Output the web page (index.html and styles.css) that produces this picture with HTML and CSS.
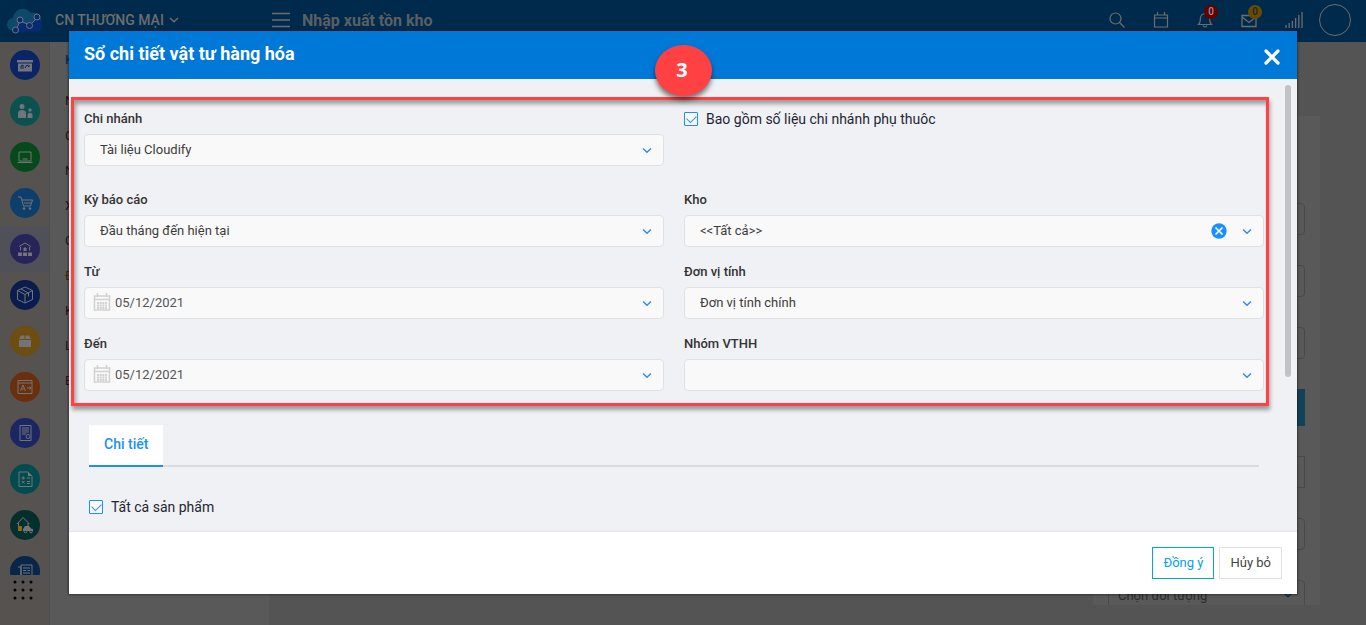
FILE: index.html
```html
<!DOCTYPE html>
<html lang="vi">
<head>
<meta charset="utf-8">
<meta name="viewport" content="width=device-width, initial-scale=1">
<title>Sổ chi tiết vật tư hàng hóa</title>
<link rel="stylesheet" href="styles.css">
</head>
<body>
<svg class="defs" aria-hidden="true">
  <symbol id="chevron" viewBox="0 0 10 6"><path d="M1 1l4 3.8L9 1" fill="none" stroke="currentColor" stroke-width="1.4"/></symbol>
  <symbol id="calendar" viewBox="0 0 18 20"><path d="M1.500 4h15v14h-15zM1.500 7.500h15M4.500 1v4M13.500 1v4" fill="none" stroke="currentColor" stroke-width="1.600"/><path d="M4 11h10M4 13.500h10M4 16h10" fill="none" stroke="currentColor" stroke-width="1.800" stroke-dasharray="2 .66"/></symbol>
</svg>

<div class="app">
  <header class="topbar">
    <div class="brand">
      <svg class="logo" viewBox="0 0 38 28"><path d="M8 25C-1 25-1 13 7 12 8 3 19-1 25 7c6-1 11 3 10 9 2 5-1 9-5 9z" fill="#0b4a69"/><path d="M8 26L14 15l9 4L31 12c8 3 7 13-1 13.500z" fill="#082a75"/><path d="M10 24l4-9 10 4 7-7" fill="none" stroke="#77736f"/><g fill="#082a75" stroke="#77736f"><circle cx="9.500" cy="24" r="3"/><circle cx="14" cy="14" r="3"/><circle cx="23.500" cy="19.500" r="3"/><circle cx="31" cy="11" r="3"/></g></svg>
      <button class="branch" type="button">CN THƯƠNG MẠI <svg width="10" height="6"><use href="#chevron"/></svg></button>
    </div>
    <button class="icon-button" type="button" aria-label="Menu"><svg width="18" height="16" viewBox="0 0 18 16"><path d="M0 1.500h18M0 8h18M0 14.500h18" stroke="currentColor" stroke-width="1.3"/></svg></button>
    <h1 class="page-title">Nhập xuất tồn kho</h1>
    <nav class="tools">
      <button class="icon-button" type="button" aria-label="Search"><svg width="16" height="16" viewBox="0 0 16 16" fill="none" stroke="currentColor" stroke-width="1.2"><circle cx="6.500" cy="6.500" r="5.500"/><path d="M10.500 10.500L15.500 15.500"/></svg></button>
      <button class="icon-button" type="button" aria-label="Calendar"><svg width="16" height="16" viewBox="0 0 16 16" fill="none" stroke="currentColor" stroke-width="1.2"><path d="M1.500 3h13v12h-13zM1.500 6h13M4.500 0v3M11.500 0v3"/></svg></button>
      <button class="icon-button" type="button" aria-label="Alerts"><svg width="16" height="16" viewBox="0 0 16 16" fill="none" stroke="currentColor" stroke-width="1.2"><path d="M1.500 12.500C4 10 3 8 3.500 5.500c1-5 8-5 9 0C13 8 12 10 14.500 12.500zM6 13.500c1 2 3 2 4 0"/></svg><span class="badge">0</span></button>
      <button class="icon-button" type="button" aria-label="Messages"><svg width="16" height="16" viewBox="0 0 16 16" fill="none" stroke="currentColor" stroke-width="1.3"><path d="M1 3.500h14v11H1zM1 5l7 5.500L15 5"/></svg><span class="badge badge-gold">0</span></button>
      <svg class="signal" width="18" height="16" viewBox="0 0 18 16"><path d="M1 16v-3M4.200 16v-5M7.400 16V9M10.600 16V6M13.800 16V3M17 16V0" stroke="currentColor" stroke-width="1.300"/></svg>
      <button class="avatar" type="button" aria-label="Account"></button>
    </nav>
  </header>

  <div class="workspace">
    <nav class="sidebar">
      <div class="modules">
        <a class="module" href="#" aria-label="Dashboard"><svg class="disc blue" viewBox="0 0 30 30"><path class="solid" d="M7 10h16v2.500H7zM8 13.500h14v8H8z"/><path d="M11 19v-3l2-1v4M15 18l2-3 2 2v-2" stroke="#0b2466"/></svg></a>
        <a class="module" href="#" aria-label="Customers"><svg class="disc teal" viewBox="0 0 30 30"><circle class="solid" cx="12" cy="10.500" r="2.500"/><path class="solid" d="M8 22v-5c0-4 8-4 8 0v5z"/><circle class="solid" cx="20" cy="14" r="1.700"/><path class="solid" d="M17.500 22v-3c0-3 5-3 5 0v3z"/></svg></a>
        <a class="module" href="#" aria-label="Sales"><svg class="disc green" viewBox="0 0 30 30"><path d="M9 10h12v9H9zM7.500 20.500h15M12.500 17h5"/></svg></a>
        <a class="module" href="#" aria-label="Purchasing"><svg class="disc sky" viewBox="0 0 30 30"><path d="M8 9h3l2.500 9h7l2-6H12M14 15h7"/><circle class="solid" cx="14" cy="20.500" r="1.200"/><circle class="solid" cx="20" cy="20.500" r="1.200"/></svg></a>
        <a class="module active" href="#" aria-label="Inventory"><svg class="disc violet" viewBox="0 0 30 30"><path d="M9 12.500l6-3.500 6 3.500M10.500 13v3.500M19.500 13v3.500M15 13v3"/><path class="solid" d="M8 18.500h4v3.500H8zM13 18.500h4v3.500h-4zM18 18.500h4v3.500h-4zM13.500 14h3v3h-3z"/></svg></a>
        <a class="module" href="#" aria-label="Products"><svg class="disc navy" viewBox="0 0 30 30"><path d="M15 7l7.500 3.500v9L15 23l-7.500-3.500v-9zM7.500 10.500L15 14.500l7.500-4M15 14.500V23M11 9l7.500 4v3.500"/></svg></a>
        <a class="module" href="#" aria-label="Packages"><svg class="disc gold" viewBox="0 0 30 30"><path class="solid" d="M11 9.500h3.500v3.500H9zM15.500 9.500H19l2 3.500h-5.500zM9 14h12v7H9z"/></svg></a>
        <a class="module" href="#" aria-label="Assets"><svg class="disc orange" viewBox="0 0 30 30"><path d="M8 8.500h14v13H8zM8 11h14M10.500 19l2.500-6 2.500 6M11.500 17h3M17 16h4M19.500 14.500L21 16l-1.500 1.500"/></svg></a>
        <a class="module" href="#" aria-label="Invoices"><svg class="disc indigo" viewBox="0 0 30 30"><path d="M10 7.500h11v15H10zM12 10h7M12 12h7M12 14h7M12 16h4"/><circle cx="18" cy="18.500" r="2"/></svg></a>
        <a class="module" href="#" aria-label="Accounting"><svg class="disc cyan" viewBox="0 0 30 30"><path d="M9 8h9l4 4v10.500H9zM11.500 14h3.500M13.200 12.300v3.400M17 14h3M12 17l2.500 2.500M14.500 17L12 19.500M17 17.500h3M17 19.500h3"/><path class="solid" d="M18 8l4 4h-4z"/></svg></a>
        <a class="module" href="#" aria-label="Property"><svg class="disc pine" viewBox="0 0 30 30"><path d="M7 14l6-6.500 6.500 6.500M8.500 13v8M18 13v3"/><path class="solid" d="M13 21v-2l2-3h4l2 2.500 2 .5v2z"/><path d="M8.500 16.500h3v4h-3z" stroke="#8b6b10" fill="#8b6b10"/><circle cx="15.500" cy="21.500" r="1.300"/><circle cx="21" cy="21.500" r="1.300"/></svg></a>
        <a class="module" href="#" aria-label="News"><svg class="disc ocean" viewBox="0 0 30 30"><path d="M11 9h11v14H11zM8 11h3v12H8M13 12h7M13 14.500h3M17.500 14.500H20M13 17h7"/></svg></a>
      </div>
      <button class="icon-button more" type="button" aria-label="All modules"><svg width="20" height="20" viewBox="0 0 20 20"><g fill="#000"><circle cx="2" cy="2" r="1.500"/><circle cx="10" cy="2" r="1.500"/><circle cx="18" cy="2" r="1.500"/><circle cx="2" cy="10" r="1.500"/><circle cx="10" cy="10" r="1.500"/><circle cx="18" cy="10" r="1.500"/><circle cx="2" cy="18" r="1.500"/><circle cx="10" cy="18" r="1.500"/><circle cx="18" cy="18" r="1.500"/></g></svg></button>
    </nav>
    <nav class="submenu">
      <a class="current" href="#">K</a>
      <a href="#">N</a><a href="#">C</a><a href="#">N</a><a href="#">X</a><a href="#">C</a><a class="marked" href="#">Đ</a><a href="#">K</a><a href="#">L</a><a href="#">B</a>
    </nav>
    <main class="content">
      <div class="filters">
        <div class="ghost"></div><div class="ghost"></div><div class="ghost"></div>
        <div class="ghost ghost-button"></div>
        <div class="ghost square"></div><div class="ghost"></div>
        <div class="ghost ghost-select">Chọn đối tượng <svg width="10" height="6"><use href="#chevron"/></svg></div>
      </div>
    </main>
  </div>
</div>

<div class="overlay">
  <section class="dialog" role="dialog" aria-labelledby="dialog-title">
    <header class="dialog-head">
      <h2 id="dialog-title">Sổ chi tiết vật tư hàng hóa</h2>
      <button class="close" type="button" aria-label="Close"><svg width="18" height="18" viewBox="0 0 18 18"><path d="M3 3l12 12M15 3L3 15" stroke="#fff" stroke-width="3.200" stroke-linecap="round"/></svg></button>
    </header>
    <form class="dialog-body">
      <div class="fields">
        <div class="field wide-gap">
          <label for="branch">Chi nhánh</label>
          <div class="control"><select id="branch"><option>Tài liệu Cloudify</option></select><svg class="arrow"><use href="#chevron"/></svg></div>
        </div>
        <div class="field wide-gap"><label class="check"><input type="checkbox" checked>Bao gồm số liệu chi nhánh phụ thuôc</label></div>
        <div class="field">
          <label for="period">Kỳ báo cáo</label>
          <div class="control"><select id="period"><option>Đầu tháng đến hiện tại</option></select><svg class="arrow"><use href="#chevron"/></svg></div>
        </div>
        <div class="field">
          <label for="stock">Kho</label>
          <div class="control"><select id="stock"><option>&lt;&lt;Tất cả&gt;&gt;</option></select><button class="clear" type="button" aria-label="Clear"><svg width="16" height="16" viewBox="0 0 16 16"><circle cx="8" cy="8" r="7.700" fill="#1890ff"/><path d="M4.500 4.500l7 7M11.500 4.500l-7 7" stroke="#fff" stroke-width="1.700"/></svg></button><svg class="arrow"><use href="#chevron"/></svg></div>
        </div>
        <div class="field">
          <label for="from">Từ</label>
          <div class="control date"><svg class="cal"><use href="#calendar"/></svg><input id="from" type="text" value="05/12/2021"><svg class="arrow"><use href="#chevron"/></svg></div>
        </div>
        <div class="field">
          <label for="unit">Đơn vị tính</label>
          <div class="control"><select id="unit"><option>Đơn vị tính chính</option></select><svg class="arrow"><use href="#chevron"/></svg></div>
        </div>
        <div class="field">
          <label for="to">Đến</label>
          <div class="control date"><svg class="cal"><use href="#calendar"/></svg><input id="to" type="text" value="05/12/2021"><svg class="arrow"><use href="#chevron"/></svg></div>
        </div>
        <div class="field">
          <label for="group">Nhóm VTHH</label>
          <div class="control"><select id="group"><option></option></select><svg class="arrow"><use href="#chevron"/></svg></div>
        </div>
        <div class="highlight"></div>
      </div>
      <div class="tabs"><button class="tab" type="button">Chi tiết</button></div>
      <label class="check all-products"><input type="checkbox" checked>Tất cả sản phẩm</label>
    </form>
    <footer class="dialog-foot">
      <button class="primary" type="button">Đồng ý</button>
      <button type="button">Hủy bỏ</button>
    </footer>
    <div class="scroll-thumb"></div>
    <div class="step">3</div>
  </section>
</div>
</body>
</html>
```
FILE: styles.css
```css
* { box-sizing: border-box; }
body { margin: 0; font-family: Roboto, "Noto Sans", sans-serif; font-size: 13px; color: #333; overflow: hidden; }
button { font: inherit; color: inherit; background: none; border: 0; padding: 0; }
svg { display: block; }
.defs { position: absolute; width: 0; height: 0; }

.app { height: 100vh; display: flex; flex-direction: column; background: #545454; }
.topbar { height: 42px; flex: none; display: flex; align-items: center; padding: 0 15px 2px 6px; background: #002a4b; color: #6d6d6d; }
.brand { width: 266px; display: flex; align-items: center; gap: 11px; }
.logo { width: 38px; height: 28px; }
.branch { display: flex; align-items: center; gap: 5px; font-size: 14px; font-weight: 500; }
.icon-button { position: relative; }
.page-title { margin: 0 auto 0 12px; font-size: 16px; font-weight: 700; color: #5c5f62; }
.tools { display: flex; align-items: center; gap: 28px; }
.signal { margin-right: -12px; }
.badge { position: absolute; left: 7px; top: -7px; width: 14px; height: 14px; border-radius: 50%; background: #640000; color: #999; font-size: 10px; font-weight: 500; line-height: 14px; text-align: center; }
.badge-gold { background: #664b00; color: #222; }
.avatar { width: 32px; height: 32px; border: 1px solid #6d6d6d; border-radius: 50%; }

.workspace { flex: 1; min-height: 0; display: flex; }
.sidebar { width: 50px; display: flex; flex-direction: column; align-items: center; background: #55524f; border-right: 1px solid #4e4e4e; padding-bottom: 25px; }
.modules { flex: 1; min-height: 0; width: 100%; overflow: hidden; }
.module { height: 46px; display: flex; align-items: center; justify-content: center; }
.module.active { background: #4f5058; }
.disc { width: 30px; height: 30px; border-radius: 50%; fill: none; stroke: #727479; stroke-width: 1; }
.solid { fill: #727479; stroke: none; }
.more { margin: 5px 3px 0 0; }
.blue { background: #0b2466; } .teal { background: #0b514f; } .green { background: #064a1c; }
.sky { background: #0e3f6c; } .violet { background: #27245a; } .navy { background: #0a1c4e; }
.gold { background: #6e4d10; } .orange { background: #6a300d; } .indigo { background: #1c2662; }
.cyan { background: #024c50; } .pine { background: #052f2d; } .ocean { background: #07264a; }

.submenu { width: 219px; display: flex; flex-direction: column; padding: 0 15px; background: #595959; }
.submenu a { line-height: 17px; margin-bottom: 18px; color: #251111; text-decoration: none; }
.submenu a.current { margin: 9px 0 24px; color: #172550; font-weight: 500; }
.submenu a.marked { color: #3b2a05; }
.content { flex: 1; display: flex; justify-content: flex-end; padding: 74px 46px 20px 0; }
.filters { width: 227px; display: flex; flex-direction: column; gap: 30px; padding: 87px 15px 0; background: #595959; overflow: hidden; }
.ghost { height: 32px; flex: none; border: 1px solid #494949; border-radius: 4px; }
.ghost-button { height: 37px; border: 0; border-radius: 0; background: #134156; }
.square { border-radius: 0; }
.ghost-select { display: flex; align-items: center; justify-content: space-between; padding: 0 11px 2px 9px; color: #2c2c2c; }
.ghost-select svg { color: #0b2d59; }

.overlay { position: fixed; inset: 0; display: flex; align-items: center; justify-content: center; padding: 0 69px; }
.dialog { position: relative; width: 100%; height: 90%; display: flex; flex-direction: column; background: #fff; box-shadow: 0 0 2px 1px rgba(0, 0, 0, .4); }
.dialog-head { height: 48px; flex: none; display: flex; align-items: center; justify-content: space-between; padding: 0 16px 4px 15px; background: #0078d7; color: #fff; }
.dialog-head h2 { margin: 0; font-size: 18px; font-weight: 700; }
.close { padding-top: 7px; }
.dialog-body { flex: 1; min-height: 0; overflow: hidden; padding: 30px 33px 0 15px; background: #f0f1f4; }
.fields { position: relative; display: grid; grid-template-columns: 1fr 1fr; column-gap: 20px; }
.field { padding-bottom: 15px; }
.wide-gap { padding-bottom: 24px; }
.field > label { display: block; height: 20px; margin-bottom: 5px; line-height: 20px; font-weight: 500; }
.control { position: relative; height: 32px; }
.control select, .control input { width: 100%; height: 100%; appearance: none; border: 1px solid #dfe1e4; border-radius: 4px; background: #f9f9f9; padding: 0 15px 1px; font: inherit; color: #3c3c3c; outline: 0; }
.control input { padding-left: 30px; color: #555; }
.arrow { position: absolute; right: 12px; top: 13px; width: 10px; height: 7px; color: #3189f5; pointer-events: none; }
.cal { position: absolute; left: 9px; top: 5px; width: 18px; height: 20px; color: #d2d2d2; }
.clear { position: absolute; right: 37px; top: 8px; }
.field > label.check, .check { display: flex; align-items: center; gap: 8px; font-size: 14px; font-weight: 400; line-height: 20px; color: #1f2533; }
.check input { appearance: none; position: relative; width: 14px; height: 14px; margin: 0; border: 1px solid #1890ff; border-radius: 1px; background: #f8faff; }
.check input:checked::after { content: ""; position: absolute; left: 2px; top: 2px; width: 8px; height: 5px; border-left: 1px solid #3c8cff; border-bottom: 1px solid #3c8cff; transform: rotate(-45deg); }
.highlight { position: absolute; inset: -12px -5px 0 -13px; border: 3px solid #ff4144; box-shadow: 1px 4px 4px rgba(0, 0, 0, .35), inset 2px 4px 4px rgba(0, 0, 0, .35); pointer-events: none; }
.tabs { margin: 19px 5px 0; display: flex; border-bottom: 2px solid #d9dbde; }
.tab { height: 42px; margin-bottom: -2px; padding: 0 15px 2px; background: #fff; border-bottom: 2px solid #1890ff; color: #1890ff; font-size: 14px; font-weight: 500; }
.all-products { margin: 30px 5px 0; }
.dialog-foot { height: 63px; flex: none; display: flex; align-items: center; justify-content: flex-end; gap: 5px; padding-right: 15px; border-top: 1px solid #e4e5e7; background: #fff; }
.dialog-foot button { height: 32px; padding: 0 10px; border: 1px solid #e0e0e0; font-size: 13px; color: #444; }
.dialog-foot .primary { border-color: #00a2f2; color: #00a2f2; }
.scroll-thumb { position: absolute; right: 6px; top: 54px; width: 6px; height: 292px; border-radius: 3px; background: #c1c2c3; }
.step { position: absolute; left: 50%; top: 14px; width: 57px; height: 51px; margin-left: -28px; padding-right: 3px; border-radius: 50%; background: #ff4144; box-shadow: 0 4px 5px rgba(0, 0, 0, .5); color: #fff; font: 700 20px/50px "Noto Sans", sans-serif; text-align: center; }
```
